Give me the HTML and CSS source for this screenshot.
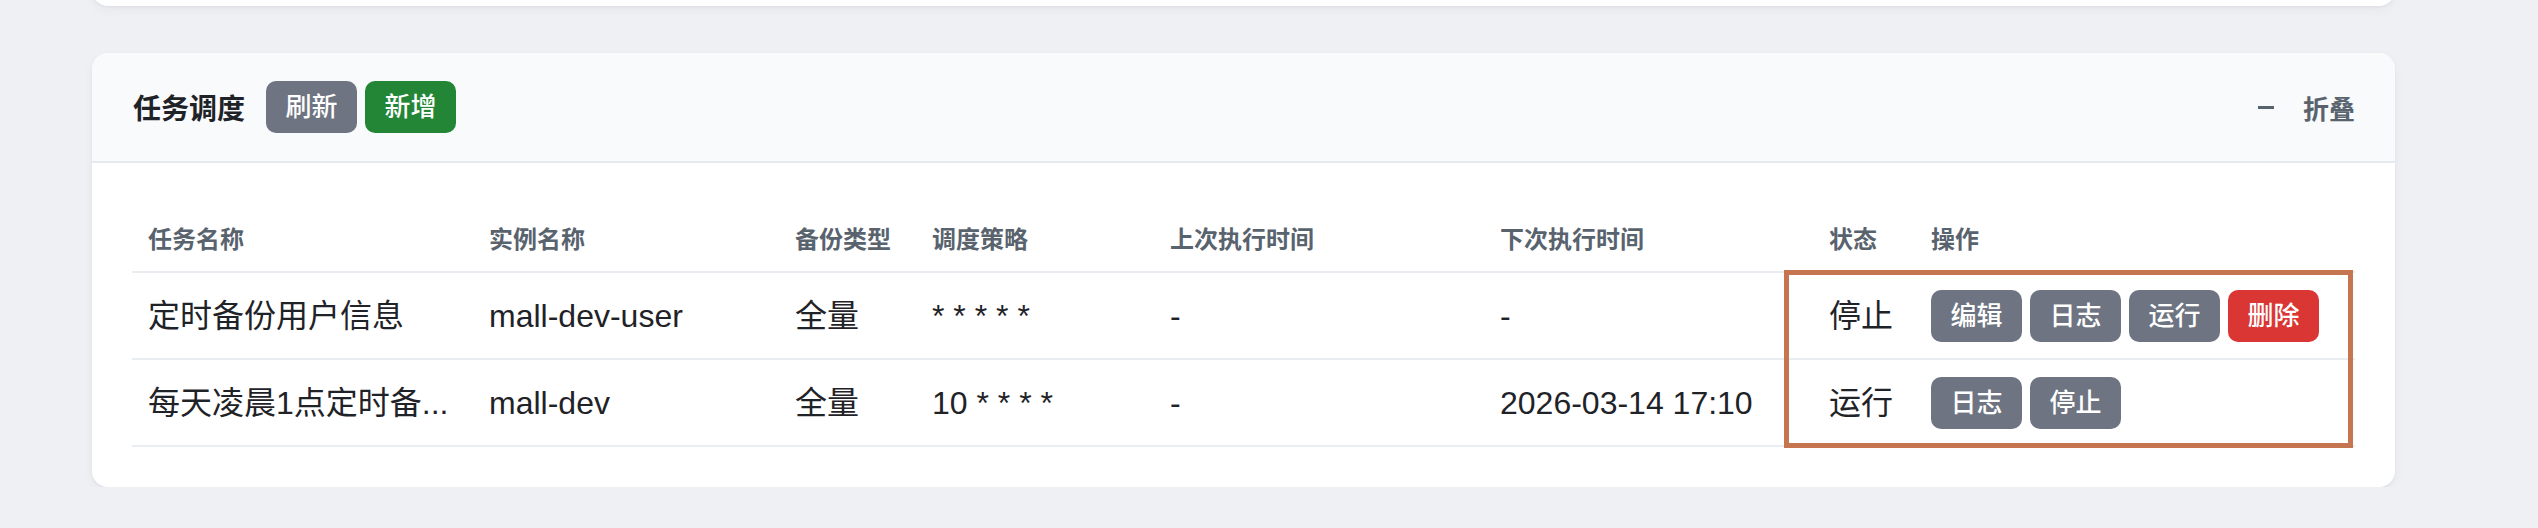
FILE: index.html
```html
<!DOCTYPE html>
<html lang="zh-CN">
<head>
<meta charset="utf-8">
<title>任务调度</title>
<link rel="stylesheet" href="styles.css">
</head>
<body>
<div class="page">
  <div class="card prev-card"></div>
  <section class="card">
    <header class="card-head">
      <div class="head-left">
        <h2 class="title">任务调度</h2>
        <button class="btn btn-gray">刷新</button>
        <button class="btn btn-green">新增</button>
      </div>
      <button class="collapse"><span class="minus" aria-hidden="true"></span><span>折叠</span></button>
    </header>
    <div class="card-body">
      <div class="table-wrap">
        <table class="tbl">
          <colgroup>
            <col class="c-name"><col class="c-inst"><col class="c-type"><col class="c-cron">
            <col class="c-last"><col class="c-next"><col class="c-state"><col class="c-ops">
          </colgroup>
          <thead>
            <tr>
              <th>任务名称</th><th>实例名称</th><th>备份类型</th><th>调度策略</th>
              <th>上次执行时间</th><th>下次执行时间</th><th>状态</th><th>操作</th>
            </tr>
          </thead>
          <tbody>
            <tr>
              <td>定时备份用户信息</td>
              <td>mall-dev-user</td>
              <td>全量</td>
              <td>* * * * *</td>
              <td>-</td>
              <td>-</td>
              <td>停止</td>
              <td>
                <div class="ops">
                  <button class="btn btn-gray">编辑</button>
                  <button class="btn btn-gray">日志</button>
                  <button class="btn btn-gray">运行</button>
                  <button class="btn btn-red">删除</button>
                </div>
              </td>
            </tr>
            <tr>
              <td title="每天凌晨1点定时备份">每天凌晨1点定时备...</td>
              <td>mall-dev</td>
              <td>全量</td>
              <td>10 * * * *</td>
              <td>-</td>
              <td>2026-03-14 17:10</td>
              <td>运行</td>
              <td>
                <div class="ops">
                  <button class="btn btn-gray">日志</button>
                  <button class="btn btn-gray">停止</button>
                </div>
              </td>
            </tr>
          </tbody>
        </table>
        <div class="highlight"></div>
      </div>
    </div>
  </section>
</div>
</body>
</html>
```
FILE: styles.css
```css
* { box-sizing: border-box; }

html, body {
  margin: 0;
  padding: 0;
  background: #eef0f4;
  font-family: "Liberation Sans", "Noto Sans CJK SC", sans-serif;
  color: #1f2328;
}

.page {
  padding: 0 143px 0 92px;
}

.card {
  background: #ffffff;
  border-radius: 16px;
  box-shadow: 0 1px 3px rgba(15, 23, 42, 0.05), 0 4px 12px rgba(15, 23, 42, 0.04);
  overflow: hidden;
}

.prev-card {
  height: 50px;
  margin-top: -44px;
  margin-bottom: 47px;
}

.card-head {
  height: 110px;
  padding: 0 40px 0 41px;
  background: #f9fafb;
  border-bottom: 2px solid #e6e9ee;
  display: flex;
  align-items: center;
  justify-content: space-between;
}

.head-left {
  display: flex;
  align-items: center;
  gap: 8px;
}

.title {
  margin: 0 13px 0 0;
  font-size: 28px;
  font-weight: 700;
  color: #1f2328;
}

.btn {
  height: 52px;
  padding: 0 19.5px;
  border: none;
  border-radius: 10px;
  font-family: inherit;
  font-size: 26px;
  font-weight: 500;
  color: #ffffff;
  line-height: 52px;
  white-space: nowrap;
}

.btn-gray { background: #6e7481; }
.btn-green { background: #238636; }
.btn-red { background: #da3633; }

.collapse {
  display: flex;
  align-items: center;
  gap: 29px;
  border: none;
  background: transparent;
  padding: 0;
  font-family: inherit;
  font-size: 26px;
  font-weight: 700;
  color: #59636e;
}

.minus {
  display: block;
  width: 16px;
  height: 3px;
  background: #59636e;
}

.card-body {
  padding: 40px;
}

.table-wrap {
  position: relative;
}

.tbl {
  width: 100%;
  table-layout: fixed;
  border-collapse: separate;
  border-spacing: 0;
}

.c-name { width: 341px; }
.c-inst { width: 306px; }
.c-type { width: 137px; }
.c-cron { width: 238px; }
.c-last { width: 330px; }
.c-next { width: 329px; }
.c-state { width: 102px; }
.c-ops { width: 440px; }

.tbl th {
  height: 70px;
  padding: 0 16px;
  text-align: left;
  font-size: 24px;
  font-weight: 700;
  color: #59636e;
  border-bottom: 2px solid #e9edf1;
  vertical-align: middle;
  white-space: nowrap;
}

.tbl td {
  height: 87px;
  padding: 0 16px;
  font-size: 32px;
  line-height: 36px;
  color: #1f2328;
  border-bottom: 2px solid #e9edf1;
  vertical-align: middle;
  white-space: nowrap;
}

.ops {
  display: flex;
  gap: 8px;
}

.highlight {
  position: absolute;
  left: 1652px;
  top: 67px;
  width: 569px;
  height: 178px;
  border: 5px solid #c57550;
  pointer-events: none;
}
```
